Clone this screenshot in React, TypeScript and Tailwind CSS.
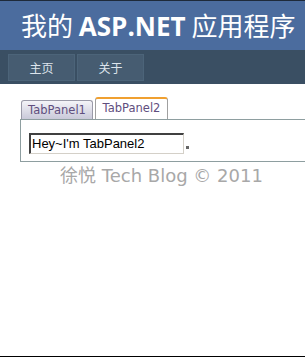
export default function App() {
  return (
    <div className="w-[305px] h-[359px] bg-white overflow-hidden flex flex-col">
      <div className="h-[50px] bg-[#4b6c9e] border-t border-[#1e2a3a] flex items-center pl-[21px] whitespace-nowrap">
        <h1 className="text-[26px] leading-none text-white" style={{ fontFamily: '"Noto Sans CJK SC", sans-serif' }}>
          我的 <span className="font-bold" style={{ fontFamily: '"Open Sans", "Noto Sans", sans-serif' }}>ASP.NET</span> 应用程序
        </h1>
      </div>
      <div className="h-[34px] bg-[#3a4f63] flex items-start pt-[4px] pl-[8px] gap-[2px]">
        <div className="w-[67px] h-[27px] bg-[#465c71] border border-[#4c6479] flex items-center justify-center text-[12px] text-[#dde4ec]" style={{ fontFamily: '"Noto Sans CJK SC", sans-serif' }}>
          主页
        </div>
        <div className="w-[67px] h-[27px] bg-[#465c71] border border-[#4c6479] flex items-center justify-center text-[12px] text-[#dde4ec]" style={{ fontFamily: '"Noto Sans CJK SC", sans-serif' }}>
          关于
        </div>
      </div>
      <div className="flex-1 flex flex-col pl-[20px] pt-[13px]">
        <div className="flex items-end gap-[2px] h-[22px]" style={{ fontFamily: '"DejaVu Sans", sans-serif' }}>
          <div className="h-[19px] w-[72px] ml-[1px] rounded-t-[3px] border border-b-0 border-[#9a9aa8] bg-gradient-to-b from-[#f4f4f8] to-[#c9c9d9] text-[11.5px] leading-[18px] text-[#5f4e7e] text-center">
            TabPanel1
          </div>
          <div className="h-[22px] w-[73px] rounded-t-[3px] border-t-[2px] border-x border-t-[#f0a030] border-x-[#a0a0a0] bg-white text-[11.5px] leading-[19px] text-[#5f4e7e] text-center">
            TabPanel2
          </div>
        </div>
        <div className="h-[43px] border-y border-l border-[#8e9ea0] flex items-start pt-[13px] pl-[8px]">
          <div className="w-[155px] h-[21px] border-t-2 border-l-2 border-b border-r border-t-[#404040] border-l-[#404040] border-b-[#d4d0c8] border-r-[#d4d0c8] bg-white text-[13px] leading-[18px] text-black pl-[1px]" style={{ fontFamily: '"Liberation Sans", sans-serif' }}>
            Hey~I'm TabPanel2
          </div>
          <div className="w-[3px] h-[3px] bg-[#666] mt-[13px] ml-[2px]" />
        </div>
        <div className="text-center text-[18px] leading-[28px] text-[#a8a8a8] pr-[2px]" style={{ fontFamily: '"DejaVu Sans", "Noto Sans CJK SC", sans-serif' }}>
          徐悦 Tech Blog © 2011
        </div>
      </div>
      <div className="h-[1px] bg-black mb-[2px]" />
    </div>
  );
}
